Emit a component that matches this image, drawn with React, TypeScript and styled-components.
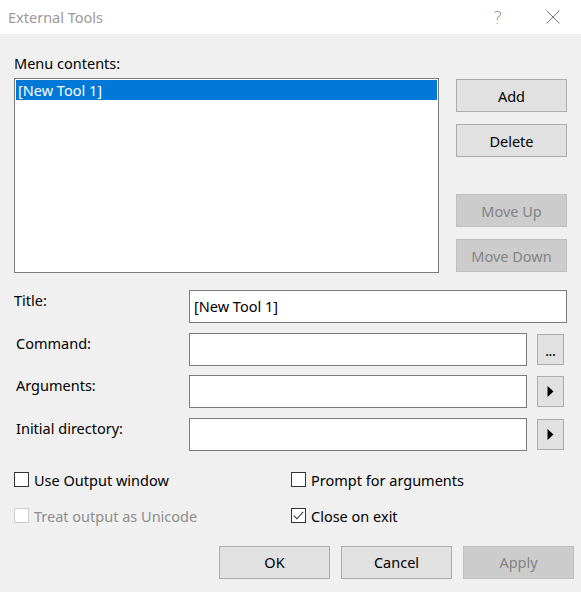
import React from 'react';
import styled, { createGlobalStyle } from 'styled-components';

const GlobalStyle = createGlobalStyle`
  html, body {
    margin: 0;
    padding: 0;
    background: #f0f0f0;
  }
  body {
    font-family: "Noto Sans", "Liberation Sans", sans-serif;
    font-size: 14.5px;
    color: #000;
  }
  * {
    box-sizing: border-box;
  }
`;

const Dialog = styled.div`
  width: 581px;
  height: 592px;
  background: #f0f0f0;
  display: flex;
  flex-direction: column;
  overflow: hidden;
`;

const TitleBar = styled.div`
  height: 34px;
  flex-shrink: 0;
  background: #fff;
  display: flex;
  align-items: center;
  padding-left: 8px;
`;

const TitleText = styled.span`
  font-size: 14.5px;
  color: #9a9a9a;
  flex: 1;
`;

const HelpGlyph = styled.span`
  width: 53px;
  font-family: "DejaVu Sans", sans-serif;
  font-weight: 200;
  font-size: 18px;
  color: #8f8f8f;
`;

const CloseButton = styled.span`
  width: 35px;
  display: flex;
  align-items: center;
`;

const Body = styled.div`
  padding: 0 7px 0 14px;
  display: flex;
  flex-direction: column;
`;

const TopSection = styled.div`
  display: flex;
  gap: 17px;
  margin-top: 19px;
`;

const ListColumn = styled.div`
  display: flex;
  flex-direction: column;
  gap: 5px;
`;

const Label = styled.div<{ $indent?: boolean }>`
  line-height: 20px;
  height: 20px;
  padding-left: ${p => (p.$indent ? '2px' : '0')};
  white-space: nowrap;
`;

const ListBox = styled.div`
  width: 425px;
  height: 195px;
  background: #fff;
  border: 1px solid #7a7a7a;
  padding: 1px;
`;

const ListItem = styled.div<{ $selected?: boolean }>`
  height: 20px;
  line-height: 20px;
  padding-left: 2px;
  background: ${p => (p.$selected ? '#0078d7' : 'transparent')};
  color: ${p => (p.$selected ? '#fff' : '#000')};
`;

const ButtonColumn = styled.div`
  display: flex;
  flex-direction: column;
  padding-top: 26px;
  gap: 12px;
`;

const Spacer = styled.div`
  height: 13px;
`;

const Button = styled.button<{ $disabled?: boolean }>`
  width: 111px;
  height: 33px;
  font-family: inherit;
  font-size: 14.5px;
  padding: 0;
  background: ${p => (p.$disabled ? '#cccccc' : '#e1e1e1')};
  border: 1px solid ${p => (p.$disabled ? '#bfbfbf' : '#adadad')};
  color: ${p => (p.$disabled ? '#838383' : '#000')};
  cursor: default;
`;

const FieldGrid = styled.div`
  display: grid;
  grid-template-columns: 175px 338px 10px 30px;
  grid-auto-rows: 33px;
  row-gap: 9.5px;
  margin-top: 17px;
`;

const TextInput = styled.div<{ $wide?: boolean }>`
  grid-column: ${p => (p.$wide ? '2 / 5' : '2 / 3')};
  height: 33px;
  background: #fff;
  border: 1px solid #7a7a7a;
  padding: 0 4px;
  line-height: 30px;
  white-space: nowrap;
`;

const SmallButton = styled.div`
  grid-column: 4 / 5;
  justify-self: start;
  width: 27px;
  height: 31px;
  margin-top: 1px;
  background: #e1e1e1;
  border: 1px solid #adadad;
  display: flex;
  align-items: center;
  justify-content: center;
`;

const Ellipsis = styled.span`
  font-size: 12px;
  line-height: 12px;
  margin-top: 6px;
  font-weight: 600;
`;

const CheckGrid = styled.div`
  display: grid;
  grid-template-columns: 277px 1fr;
  grid-auto-rows: 20px;
  row-gap: 16px;
  margin-top: 19px;
`;

const CheckRow = styled.label<{ $disabled?: boolean }>`
  display: flex;
  align-items: center;
  gap: 5px;
  color: ${p => (p.$disabled ? '#8d8d8d' : '#000')};
  white-space: nowrap;
`;

const Box = styled.span<{ $disabled?: boolean }>`
  width: 15px;
  height: 15px;
  flex-shrink: 0;
  background: #fff;
  border: 1px solid ${p => (p.$disabled ? '#cccccc' : '#333333')};
  display: flex;
  align-items: center;
  justify-content: center;
`;

const Footer = styled.div`
  display: flex;
  justify-content: flex-end;
  gap: 11px;
  margin-top: 20px;
`;

const Triangle = () => (
  <svg width="7" height="11" viewBox="0 0 7 11">
    <path d="M0.5 0 L6.5 5.5 L0.5 11 Z" fill="#000" />
  </svg>
);

const CheckMark = () => (
  <svg width="11" height="9" viewBox="0 0 11 9">
    <path d="M0.8 4.6 L3.9 7.8 L10.2 0.8" fill="none" stroke="#333" strokeWidth="1.1" />
  </svg>
);

const CloseIcon = () => (
  <svg width="14" height="14" viewBox="0 0 14 14">
    <path d="M0.5 0.5 L13.5 13.5 M13.5 0.5 L0.5 13.5" stroke="#7a7a7a" strokeWidth="1" />
  </svg>
);

interface CheckProps {
  label: string;
  checked?: boolean;
  disabled?: boolean;
}

const Check: React.FC<CheckProps> = ({ label, checked, disabled }) => (
  <CheckRow $disabled={disabled}>
    <Box $disabled={disabled}>{checked && <CheckMark />}</Box>
    {label}
  </CheckRow>
);

const App: React.FC = () => {
  return (
    <>
      <GlobalStyle />
      <Dialog>
        <TitleBar>
          <TitleText>External Tools</TitleText>
          <HelpGlyph>?</HelpGlyph>
          <CloseButton>
            <CloseIcon />
          </CloseButton>
        </TitleBar>

        <Body>
          <TopSection>
            <ListColumn>
              <Label>Menu contents:</Label>
              <ListBox>
                <ListItem $selected>[New Tool 1]</ListItem>
              </ListBox>
            </ListColumn>
            <ButtonColumn>
              <Button>Add</Button>
              <Button>Delete</Button>
              <Spacer />
              <Button $disabled>Move Up</Button>
              <Button $disabled>Move Down</Button>
            </ButtonColumn>
          </TopSection>

          <FieldGrid>
            <Label>Title:</Label>
            <TextInput $wide>[New Tool 1]</TextInput>

            <Label $indent>Command:</Label>
            <TextInput />
            <SmallButton>
              <Ellipsis>...</Ellipsis>
            </SmallButton>

            <Label $indent>Arguments:</Label>
            <TextInput />
            <SmallButton>
              <Triangle />
            </SmallButton>

            <Label $indent>Initial directory:</Label>
            <TextInput />
            <SmallButton>
              <Triangle />
            </SmallButton>
          </FieldGrid>

          <CheckGrid>
            <Check label="Use Output window" />
            <Check label="Prompt for arguments" />
            <Check label="Treat output as Unicode" disabled />
            <Check label="Close on exit" checked />
          </CheckGrid>

          <Footer>
            <Button>OK</Button>
            <Button>Cancel</Button>
            <Button $disabled>Apply</Button>
          </Footer>
        </Body>
      </Dialog>
    </>
  );
};

export default App;
